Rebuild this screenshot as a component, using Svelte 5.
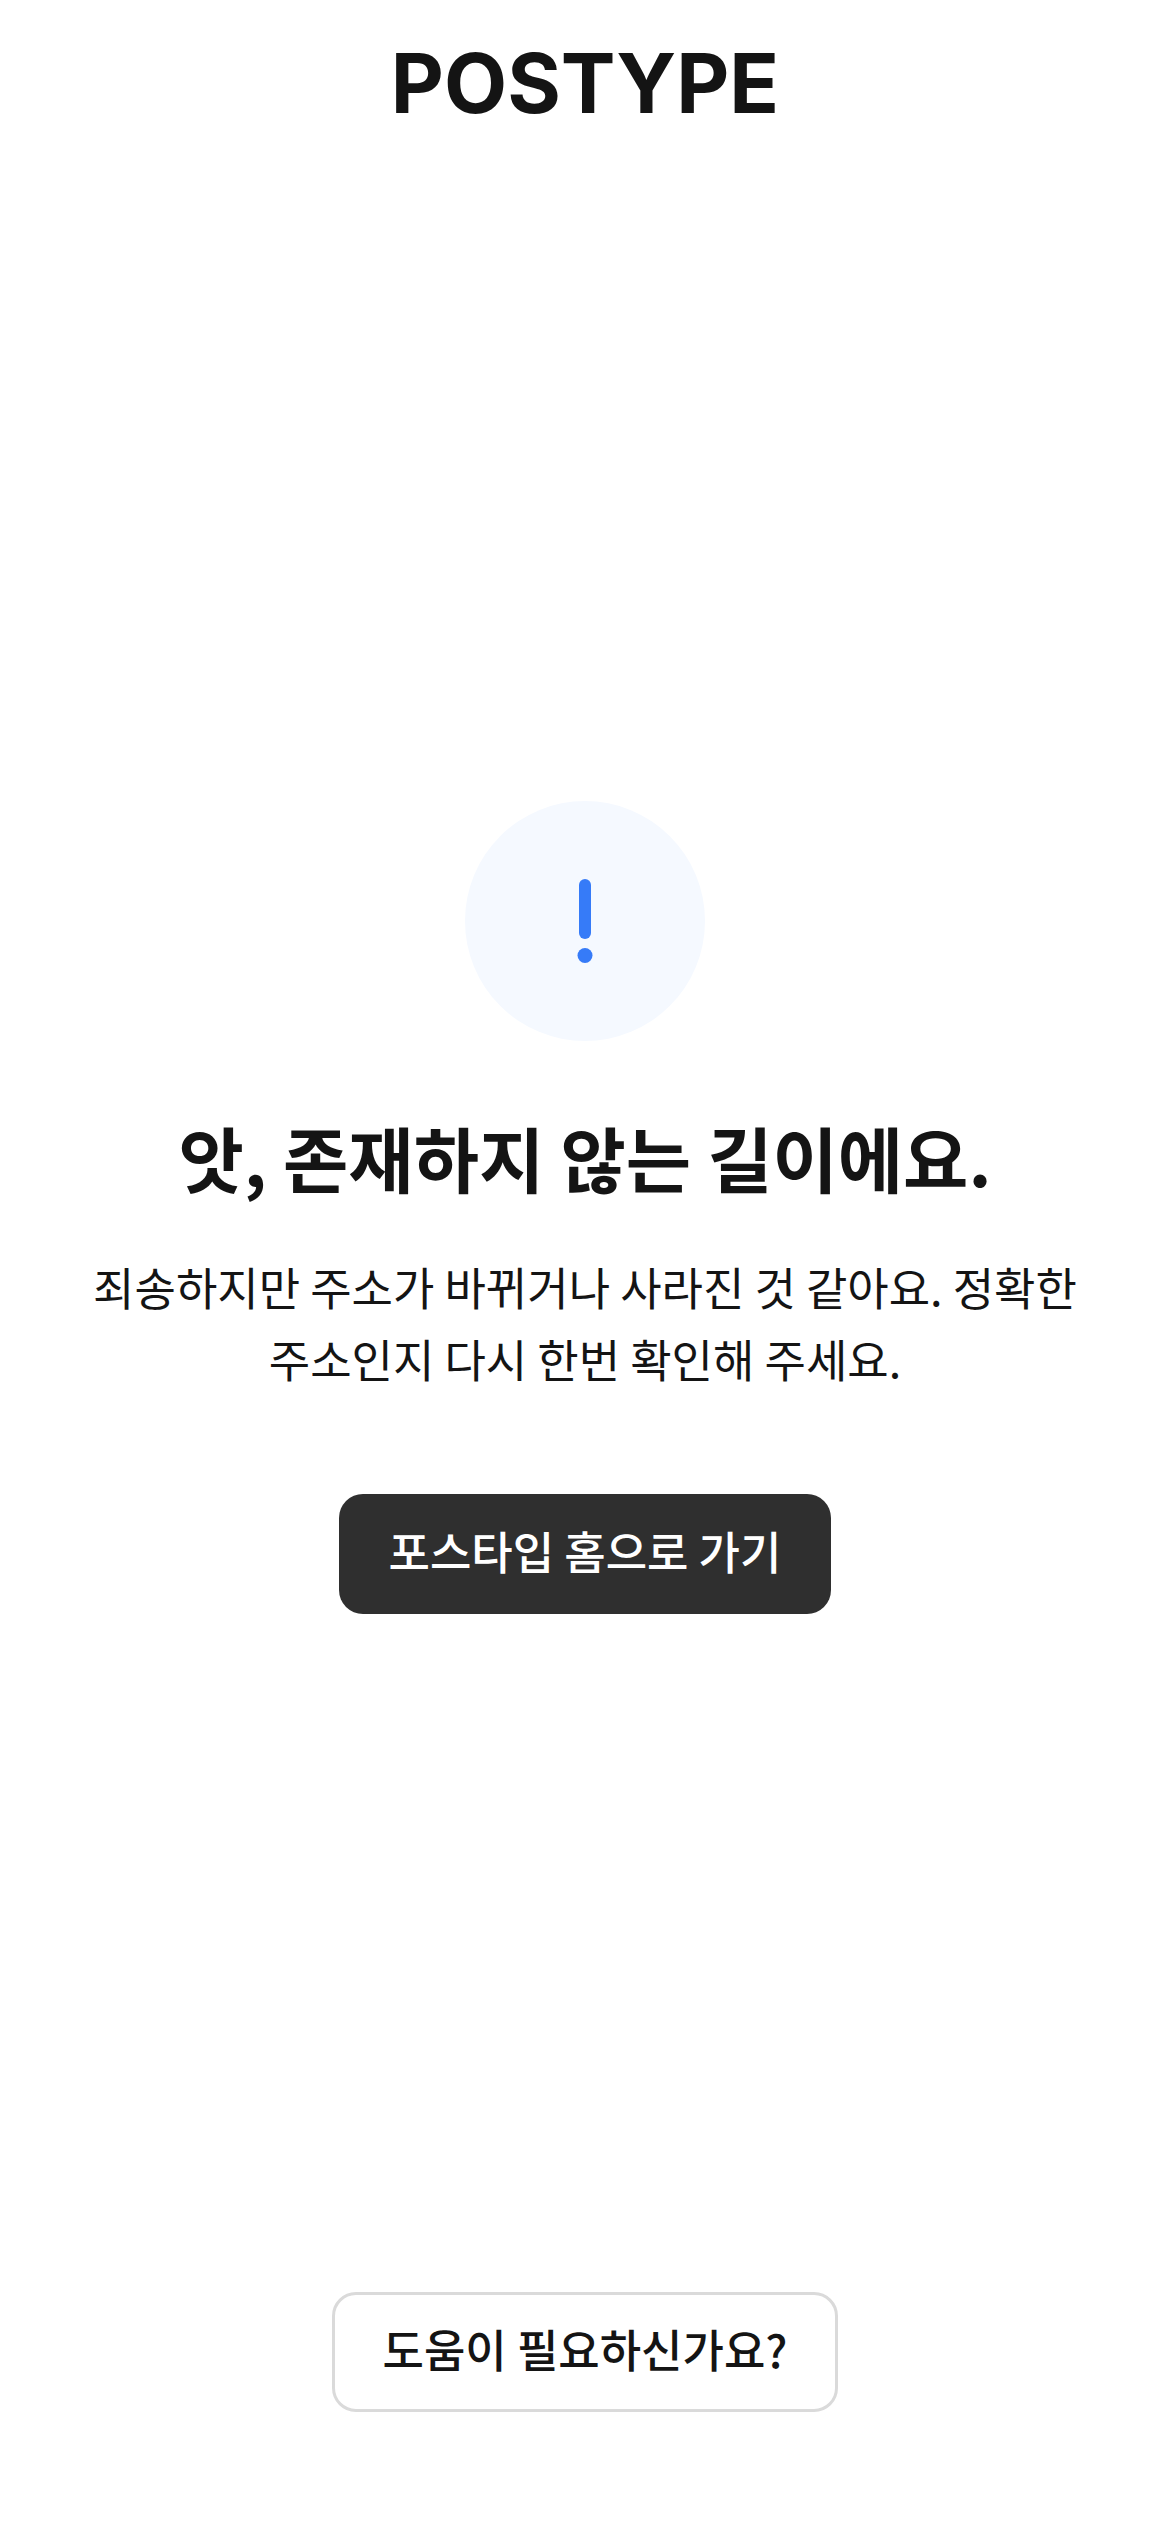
<script lang="ts">
	interface Props {
		title?: string;
		message?: string;
		homeHref?: string;
		onHelp?: () => void;
	}

	let {
		title = '앗, 존재하지 않는 길이에요.',
		message = '죄송하지만 주소가 바뀌거나 사라진 것 같아요. 정확한 주소인지 다시 한번 확인해 주세요.',
		homeHref = '/',
		onHelp
	}: Props = $props();
</script>

<div class="page">
	<header class="header">
		<a class="logo" href={homeHref}>POSTYPE</a>
	</header>

	<main class="content">
		<svg class="icon" viewBox="0 0 240 240" aria-hidden="true">
			<circle cx="120" cy="120" r="120" fill="#f5f9ff" />
			<rect x="114" y="78" width="12" height="60" rx="6" fill="#367bf8" />
			<circle cx="120" cy="154.5" r="7.5" fill="#367bf8" />
		</svg>
		<h1 class="title">{title}</h1>
		<p class="message">{message}</p>
		<a class="btn primary" href={homeHref}>포스타입 홈으로 가기</a>
	</main>

	<footer class="footer">
		<button type="button" class="btn outline" onclick={() => onHelp?.()}>도움이 필요하신가요?</button>
	</footer>
</div>

<style>
	:global(body) {
		margin: 0;
		background: #fff;
	}

	.page {
		display: flex;
		flex-direction: column;
		min-height: 100vh;
		font-family: 'Noto Sans CJK KR', sans-serif;
		color: #141414;
	}

	.header {
		display: flex;
		align-items: center;
		justify-content: center;
		height: 168px;
	}

	.logo {
		font-family: Inter, sans-serif;
		font-size: 82px;
		font-weight: 700;
		line-height: 96px;
		color: inherit;
		text-decoration: none;
	}

	.content {
		flex: 1;
		display: flex;
		flex-direction: column;
		align-items: center;
		justify-content: center;
		padding: 0 48px;
		text-align: center;
		word-break: keep-all;
	}

	.icon {
		width: 240px;
		height: 240px;
	}

	.title {
		margin: 63px 0 42px;
		font-size: 71px;
		font-weight: 700;
		line-height: 105px;
	}

	.message {
		margin: 0 0 99px;
		font-size: 45px;
		line-height: 72px;
	}

	.btn {
		box-sizing: border-box;
		display: inline-flex;
		align-items: center;
		justify-content: center;
		height: 120px;
		padding: 0 48px 6px;
		border: none;
		border-radius: 24px;
		font-family: inherit;
		font-size: 45px;
		font-weight: 500;
		line-height: 72px;
		text-decoration: none;
		cursor: pointer;
	}

	.primary {
		padding-inline: 50px;
		background: #2f2f2f;
		color: #fff;
	}

	.outline {
		border: 3px solid #dadada;
		background: #fff;
		color: #141414;
	}

	.footer {
		display: flex;
		justify-content: center;
		padding: 46px 48px 120px;
	}
</style>
